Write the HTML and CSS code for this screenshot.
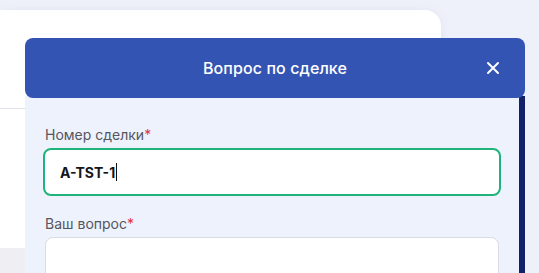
FILE: index.html
```html
<!DOCTYPE html>
<html>
<head>
<meta charset="utf-8">
<meta name="viewport" content="width=device-width,initial-scale=1">
<link rel="stylesheet" href="styles.css">
<title>Вопрос по сделке</title>
</head>
<body>
<div class="page">
  <div class="card">
    <div class="card-top"></div>
    <div class="card-body"></div>
    <div class="card-foot"></div>
  </div>
</div>

<div class="modal">
  <div class="modal-head">
    <h2 class="modal-title">Вопрос по сделке</h2>
    <button class="modal-close" aria-label="Закрыть">
      <svg width="14" height="14" viewBox="0 0 14 14"><path d="M2 2L12 12M12 2L2 12" stroke="#fff" stroke-width="2" stroke-linecap="round"/></svg>
    </button>
  </div>
  <div class="modal-body">
    <div class="field">
      <label class="field-label">Номер сделки<span class="req">*</span></label>
      <div class="field-input focused">A-TST-1<span class="caret"></span></div>
    </div>
    <div class="field">
      <label class="field-label">Ваш вопрос<span class="req">*</span></label>
      <div class="field-input area"></div>
    </div>
  </div>
</div>
</body>
</html>
```

FILE: styles.css
```css
body {
  margin: 0;
  background: #eff1fa;
  font-family: Inter, "Noto Sans", sans-serif;
  overflow: hidden;
  height: 273px;
}
.page {
  padding-top: 10px;
}
.card {
  width: 441px;
  background: #fff;
  border-radius: 0 16px 0 0;
  box-shadow: 0 0 12px rgba(40, 50, 120, 0.06);
}
.card-top {
  height: 98px;
  border-bottom: 1px solid #e2e3ea;
}
.card-body {
  height: 139px;
}
.card-foot {
  height: 40px;
  background: #efeff3;
}

/* modal */
.modal {
  position: absolute;
  left: 25px;
  top: 38px;
  width: 500px;
}
.modal-head {
  position: relative;
  z-index: 1;
  height: 60px;
  background: #3454b4;
  border-radius: 8px;
  display: flex;
  align-items: center;
  justify-content: center;
}
.modal-title {
  margin: 0;
  color: #fff;
  font-size: 16px;
  font-weight: 500;
  letter-spacing: 0.1px;
}
.modal-close {
  position: absolute;
  right: 25px;
  top: 23px;
  padding: 0;
  border: none;
  background: none;
  width: 14px;
  height: 14px;
  display: flex;
}
.modal-body {
  width: 454px;
  margin-top: -2px;
  padding: 29px 20px 0 20px;
  height: 200px;
  background: #eef2fd;
  border-right: 6px solid #13206a;
}
.field {
  display: flex;
  flex-direction: column;
  gap: 3px;
  margin-bottom: 18px;
}
.field-label {
  font-size: 14px;
  line-height: 20px;
  color: #55565e;
}
.req {
  color: #e3343c;
}
.field-input {
  box-sizing: border-box;
  height: 46px;
  background: #fff;
  border: 1px solid #d9dce6;
  border-radius: 8px;
  display: flex;
  align-items: center;
  padding-left: 15px;
  font-size: 14px;
  font-weight: 700;
  color: #15161a;
}
.field-input.focused {
  border: 2px solid #1fb47c;
  margin: 0 -2px;
  height: 48px;
}
.caret {
  display: inline-block;
  width: 1px;
  height: 18px;
  background: #111;
  margin-left: 1px;
}
.field-input.area {
  height: 60px;
}
```
